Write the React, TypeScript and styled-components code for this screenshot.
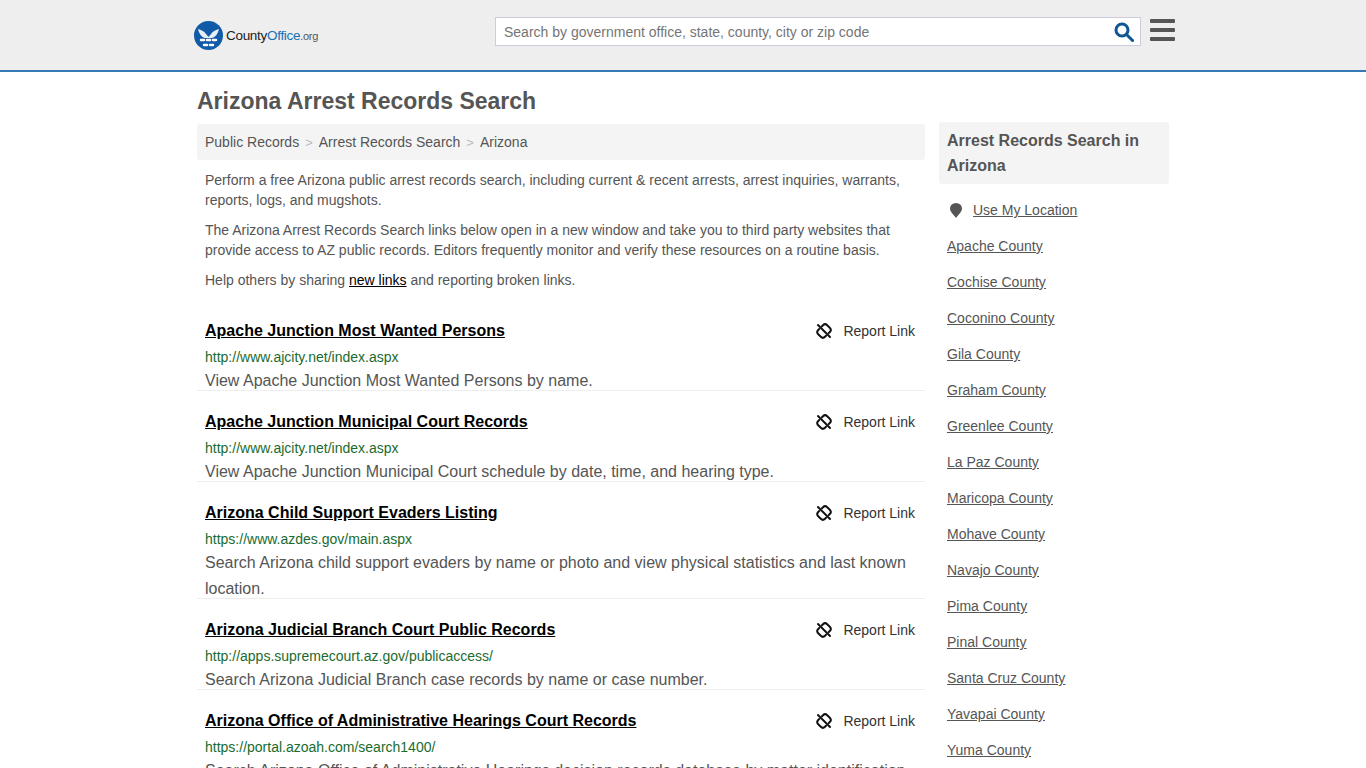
import React from 'react';
import styled, { createGlobalStyle } from 'styled-components';

const GlobalStyle = createGlobalStyle`
  html, body {
    margin: 0;
    padding: 0;
    background: #fff;
    color: #555;
    font-family: "Liberation Sans", Arial, sans-serif;
    font-size: 14px;
  }
`;

const Header = styled.header`
  height: 70px;
  background: #eeeeee;
  border-bottom: 2px solid #337ab7;
`;

const HeaderInner = styled.div`
  width: 981px;
  margin-left: 194px;
  height: 70px;
  display: flex;
  align-items: flex-start;
`;

const Logo = styled.a`
  width: 301px;
  height: 70px;
  display: flex;
  align-items: center;
`;

const LogoText = styled.span`
  margin: 1px 0 0 3px;
  font-size: 13.5px;
  letter-spacing: -0.3px;
  color: #222;
  b { font-weight: 400; color: #1a6fb5; }
  small { font-size: 11px; color: #555; }
`;

const SearchBox = styled.div`
  width: 644px;
  height: 27px;
  margin-top: 17px;
  background: #fff;
  border: 1px solid #ccd;
  display: flex;
  align-items: center;
  justify-content: space-between;
  padding: 0 6px 0 8px;
  box-sizing: border-box;
  width: 646px;
  height: 29px;
  font-size: 14px;
  color: #757575;
`;

const Burger = styled.div`
  margin: 19px 0 0 9px;
  width: 25px;
  display: flex;
  flex-direction: column;
  gap: 5px;
  i {
    display: block;
    height: 4px;
    border-radius: 1px;
    background: #555;
  }
`;

const Page = styled.div`
  width: 972px;
  margin-left: 197px;
`;

const Title = styled.h1`
  margin: 0;
  padding-top: 16px;
  height: 36px;
  font-size: 23px;
  line-height: 26px;
  font-weight: 700;
  color: #555;
`;

const Columns = styled.div`
  display: flex;
  gap: 14px;
  align-items: flex-start;
`;

const Main = styled.main`
  width: 728px;
  padding-top: 0;
`;

const Breadcrumb = styled.nav`
  height: 36px;
  margin-top: 0;
  padding: 0 8px;
  background: #f4f4f4;
  border-radius: 3px;
  display: flex;
  align-items: center;
  color: #555;
  font-size: 14px;
`;

const Crumb = styled.span`
  color: #bbb;
  margin: 0 6px;
  font-size: 13px;
`;

const Intro = styled.p`
  margin: 0 0 10px;
  padding: 0 8px;
  line-height: 20px;
  color: #555;
  font-size: 14px;
  a { color: #000; }
`;

const IntroBlock = styled.div`
  padding-top: 10px;
`;

const Item = styled.article`
  padding: 19px 8px 0;
  height: ${(p: { $h: number }) => p.$h}px;
  box-sizing: border-box;
  border-bottom: 1px solid #eee;
`;

const ItemHead = styled.div`
  display: flex;
  justify-content: space-between;
  align-items: center;
  height: 24px;
`;

const ItemTitle = styled.a`
  font-size: 16px;
  font-weight: 700;
  color: #000;
  text-decoration: underline;
`;

const Report = styled.span`
  display: flex;
  align-items: center;
  gap: 11px;
  color: #333;
  font-size: 14px;
  padding-right: 2px;
`;

const ItemUrl = styled.div`
  margin-top: 4px;
  font-size: 14px;
  line-height: 20px;
  color: #1a6b2f;
`;

const ItemDesc = styled.p`
  margin: 1px 0 0;
  font-size: 16px;
  line-height: 26px;
  color: #555;
`;

const Side = styled.aside`
  width: 230px;
  margin-top: -2px;
`;

const SideHead = styled.h2`
  margin: 0 0 8px;
  padding: 6px 8px;
  background: #f4f4f4;
  border-radius: 3px;
  font-size: 16px;
  line-height: 25px;
  font-weight: 700;
  color: #555;
`;

const SideLink = styled.a`
  display: flex;
  align-items: center;
  height: 36px;
  padding-left: 8px;
  color: #555;
  font-size: 14px;
  span { text-decoration: underline; }
`;

const Pin = styled.svg`
  width: 12px;
  height: 15px;
  margin: 0 11px 0 3px;
`;

const items = [
  { t: 'Apache Junction Most Wanted Persons', u: 'http://www.ajcity.net/index.aspx', d: 'View Apache Junction Most Wanted Persons by name.', h: 91 },
  { t: 'Apache Junction Municipal Court Records', u: 'http://www.ajcity.net/index.aspx', d: 'View Apache Junction Municipal Court schedule by date, time, and hearing type.', h: 91 },
  { t: 'Arizona Child Support Evaders Listing', u: 'https://www.azdes.gov/main.aspx', d: 'Search Arizona child support evaders by name or photo and view physical statistics and last known location.', h: 117 },
  { t: 'Arizona Judicial Branch Court Public Records', u: 'http://apps.supremecourt.az.gov/publicaccess/', d: 'Search Arizona Judicial Branch case records by name or case number.', h: 91 },
  { t: 'Arizona Office of Administrative Hearings Court Records', u: 'https://portal.azoah.com/search1400/', d: 'Search Arizona Office of Administrative Hearings decision records database by matter identification, party name, and date.', h: 117 },
];

const counties = ['Apache', 'Cochise', 'Coconino', 'Gila', 'Graham', 'Greenlee', 'La Paz', 'Maricopa', 'Mohave', 'Navajo', 'Pima', 'Pinal', 'Santa Cruz', 'Yavapai', 'Yuma'];

function BrokenLink() {
  return (
    <svg width="16" height="16" viewBox="0 0 16 16" fill="none" stroke="#111" strokeWidth="2" strokeLinecap="round">
      <path d="M2 2l12 12" />
      <path d="M6 3.2l1-1a3 3 0 0 1 4.2 0l2.6 2.6a3 3 0 0 1 0 4.2l-1 1" />
      <path d="M10 12.8l-1 1a3 3 0 0 1-4.2 0l-2.6-2.6a3 3 0 0 1 0-4.2l1-1" />
    </svg>
  );
}

export default function App() {
  return (
    <>
      <GlobalStyle />
      <Header>
        <HeaderInner>
          <Logo>
            <svg width="29" height="29" viewBox="0 0 29 29">
              <circle cx="14.5" cy="14.5" r="14.5" fill="#0f5ba7" />
              <path d="M4 8c3 1 6 2 8 5l2.500 3 2.500-3c2-3 5-4 8-5-1 4-3 8-7 9h-7c-4-1-6-5-7-9z" fill="#fff" opacity=".9" />
              <path d="M7 19h3M13 19h3M19 19h3M10 24h3M16 24h3" stroke="#fff" strokeWidth="2.500" strokeLinecap="round" />
            </svg>
            <LogoText>County<b>Office</b><small>.org</small></LogoText>
          </Logo>
          <SearchBox>
            <span>Search by government office, state, county, city or zip code</span>
            <svg width="20" height="20" viewBox="0 0 20 20" fill="none" stroke="#0f5596" strokeWidth="3">
              <circle cx="8" cy="8" r="6" />
              <path d="M12.500 12.500L18.500 18.500" strokeLinecap="round" />
            </svg>
          </SearchBox>
          <Burger><i /><i /><i /></Burger>
        </HeaderInner>
      </Header>
      <Page>
        <Title>Arizona Arrest Records Search</Title>
        <Columns>
          <Main>
            <Breadcrumb>
              Public Records<Crumb>&gt;</Crumb>Arrest Records Search<Crumb>&gt;</Crumb>Arizona
            </Breadcrumb>
            <IntroBlock>
              <Intro>Perform a free Arizona public arrest records search, including current &amp; recent arrests, arrest inquiries, warrants, reports, logs, and mugshots.</Intro>
              <Intro>The Arizona Arrest Records Search links below open in a new window and take you to third party websites that provide access to AZ public records. Editors frequently monitor and verify these resources on a routine basis.</Intro>
              <Intro>Help others by sharing <a href="#">new links</a> and reporting broken links.</Intro>
            </IntroBlock>
            {items.map((it) => (
              <Item key={it.t} $h={it.h}>
                <ItemHead>
                  <ItemTitle href="#">{it.t}</ItemTitle>
                  <Report><BrokenLink />Report Link</Report>
                </ItemHead>
                <ItemUrl>{it.u}</ItemUrl>
                <ItemDesc>{it.d}</ItemDesc>
              </Item>
            ))}
          </Main>
          <Side>
            <SideHead>Arrest Records Search in Arizona</SideHead>
            <SideLink href="#">
              <Pin viewBox="0 0 12 15"><path d="M6 15C3 11 0 8.500 0 5.500a6 5.500 0 0 1 12 0C12 8.500 9 11 6 15z" fill="#555" /></Pin>
              <span>Use My Location</span>
            </SideLink>
            {counties.map((c) => (
              <SideLink href="#" key={c}><span>{c} County</span></SideLink>
            ))}
          </Side>
        </Columns>
      </Page>
    </>
  );
}
